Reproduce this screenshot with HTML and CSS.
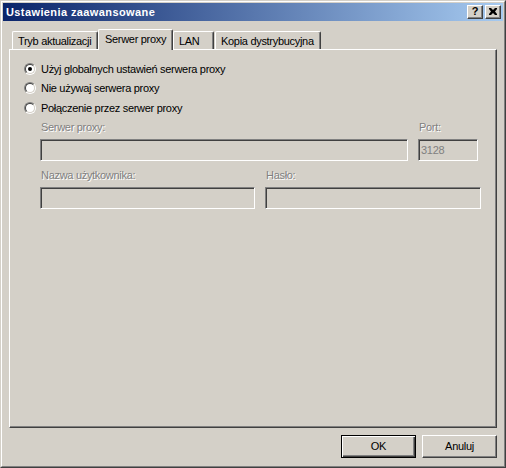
FILE: index.html
```html
<!DOCTYPE html>
<html>
<head>
<meta charset="utf-8">
<link rel="stylesheet" href="styles.css">
</head>
<body>
<div class="window">
  <div class="window-inner">
    <div class="titlebar">
      <span class="title">Ustawienia zaawansowane</span>
      <div class="title-buttons">
        <span class="tbtn">?</span>
        <span class="tbtn tbtn-close">
          <svg width="8" height="7" viewBox="0 0 8 7"><path d="M0 0h2l2 2 2-2h2v1L6 3.5 8 6v1H6L4 5 2 7H0V6l2-2.5L0 1z" fill="#000"/></svg>
        </span>
      </div>
    </div>
    <div class="body">
      <div class="tabs">
        <div class="tab tab-1">Tryb aktualizacji</div>
        <div class="tab tab-2 selected">Serwer proxy</div>
        <div class="tab tab-3">LAN</div>
        <div class="tab tab-4">Kopia dystrybucyjna</div>
      </div>
      <div class="panel">
        <div class="radios">
          <label class="radio-row"><span class="radio checked"><span class="dot"></span></span><span>Użyj globalnych ustawień serwera proxy</span></label>
          <label class="radio-row"><span class="radio"></span><span>Nie używaj serwera proxy</span></label>
          <label class="radio-row"><span class="radio"></span><span>Połączenie przez serwer proxy</span></label>
        </div>
        <div class="form-row row-1">
          <div class="field f-server">
            <div class="flabel">Serwer proxy:</div>
            <div class="input"></div>
          </div>
          <div class="field f-port">
            <div class="flabel">Port:</div>
            <div class="input">3128</div>
          </div>
        </div>
        <div class="form-row row-2">
          <div class="field f-user">
            <div class="flabel">Nazwa użytkownika:</div>
            <div class="input"></div>
          </div>
          <div class="field f-pass">
            <div class="flabel">Hasło:</div>
            <div class="input"></div>
          </div>
        </div>
      </div>
      <div class="buttons">
        <div class="btn default"><span class="btn-in">OK</span></div>
        <div class="btn"><span class="btn-in">Anuluj</span></div>
      </div>
    </div>
  </div>
</div>
</body>
</html>
```

FILE: styles.css
```css
* { box-sizing: border-box; }
html, body { margin: 0; padding: 0; }
body {
  background: #D4D0C8;
  font-family: "Liberation Sans", Arial, sans-serif;
  font-size: 11px;
  letter-spacing: -0.3px;
  color: #000;
}
.window {
  width: 506px;
  height: 468px;
  border: 1px solid;
  border-color: #D4D0C8 #404040 #404040 #D4D0C8;
}
.window-inner {
  height: 100%;
  border: 1px solid;
  border-color: #FFFFFF #808080 #808080 #FFFFFF;
  padding: 1px;
  display: flex;
  flex-direction: column;
}
.titlebar {
  height: 18px;
  background: linear-gradient(to right, #0A246A, #A6CAF0);
  display: flex;
  align-items: center;
  justify-content: space-between;
  padding: 0 2px 0 3px;
}
.title {
  color: #fff;
  font-weight: bold;
  font-size: 11px;
  letter-spacing: 0.4px;
}
.title-buttons { display: flex; gap: 2px; }
.tbtn {
  width: 16px;
  height: 14px;
  background: #D4D0C8;
  border: 1px solid;
  border-color: #FFFFFF #404040 #404040 #FFFFFF;
  box-shadow: inset -1px -1px 0 #808080;
  display: flex;
  align-items: center;
  justify-content: center;
  font-weight: bold;
  font-size: 11px;
  letter-spacing: 0;
  line-height: 1;
  padding-bottom: 1px;
}
.tbtn-close { padding: 0 1px 1px 0; }
.body {
  flex: 1;
  padding: 8px 6px 0 6px;
  display: flex;
  flex-direction: column;
}
.tabs {
  display: flex;
  align-items: flex-end;
  height: 20px;
  position: relative;
  z-index: 1;
}
.tab {
  height: 18px;
  background: #D4D0C8;
  border-top: 1px solid #fff;
  border-left: 1px solid #fff;
  border-right: 1px solid #404040;
  box-shadow: inset -1px 0 0 #808080;
  border-radius: 2px 2px 0 0;
  padding: 3px 0 0 5px;
  white-space: nowrap;
}
.tab-1 { margin-left: 3px; width: 86px; }
.tab-2 { width: 75px; }
.tab-3 { width: 41px; }
.tab-4 { width: 106px; margin-left: 1px; }
.tab.selected {
  height: 21px;
  margin-bottom: -1px;
  padding-top: 3px;
  padding-left: 6px;
}
.panel {
  height: 379px;
  border: 1px solid;
  border-color: #FFFFFF #404040 #404040 #FFFFFF;
  box-shadow: inset -1px -1px 0 #808080;
  padding: 9px 0 0 14px;
}
.radios { display: flex; flex-direction: column; }
.radio-row {
  height: 19.5px;
  display: flex;
  align-items: center;
  gap: 5px;
}
.radio {
  width: 12px;
  height: 12px;
  border-radius: 50%;
  border: 1px solid;
  border-color: #808080 #FFFFFF #FFFFFF #808080;
  position: relative;
  flex: none;
}
.radio::before {
  content: "";
  position: absolute;
  inset: 0;
  border-radius: 50%;
  border: 1px solid;
  border-color: #404040 #D4D0C8 #D4D0C8 #404040;
  background: #fff;
}
.radio .dot {
  position: absolute;
  left: 3px;
  top: 3px;
  width: 4px;
  height: 4px;
  border-radius: 50%;
  background: #000;
  z-index: 1;
}
.form-row { display: flex; gap: 10px; margin-left: 16px; }
.row-1 { margin-top: 3px; }
.row-2 { margin-top: 8px; }
.field { display: flex; flex-direction: column; }
.flabel {
  color: #808080;
  text-shadow: 1px 1px 0 #fff;
  height: 18px;
  line-height: 13px;
  padding-left: 1px;
}
.input {
  height: 22px;
  border: 1px solid;
  border-color: #808080 #FFFFFF #FFFFFF #808080;
  box-shadow: inset 1px 1px 0 #404040;
  background: #D4D0C8;
  color: #808080;
  padding: 3px 0 0 2px;
  line-height: 14px;
}
.f-server { width: 368px; }
.f-port { width: 60px; }
.f-user { width: 215px; }
.f-pass { width: 216px; }
.buttons {
  display: flex;
  justify-content: flex-end;
  gap: 6px;
  margin-top: 7px;
}
.btn {
  width: 75px;
  height: 23px;
  border: 1px solid;
  border-color: #FFFFFF #404040 #404040 #FFFFFF;
  box-shadow: inset -1px -1px 0 #808080;
  display: flex;
  align-items: center;
  justify-content: center;
}
.btn.default {
  border: 1px solid #000;
  box-shadow: inset 1px 1px 0 #fff, inset -1px -1px 0 #404040, inset -2px -2px 0 #808080;
}
.btn-in { line-height: 1; }
```
